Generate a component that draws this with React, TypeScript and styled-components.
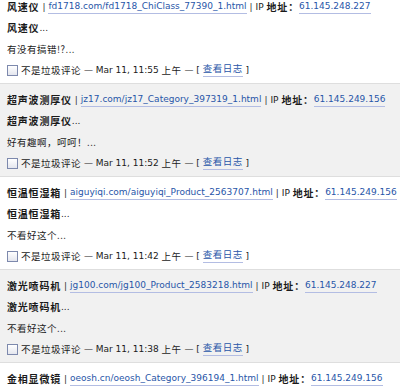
import React from "react";
import styled, { createGlobalStyle } from "styled-components";

interface Comment {
    title: string
    url: string
    ip: string
    text: string
    time: string
}

const comments: Comment[] = [
    { title: "风速仪", url: "fd1718.com/fd1718_ChiClass_77390_1.html", ip: "61.145.248.227", text: "有没有搞错!?...", time: "11:55" },
    { title: "超声波测厚仪", url: "jz17.com/jz17_Category_397319_1.html", ip: "61.145.249.156", text: "好有趣啊，呵呵！...", time: "11:52" },
    { title: "恒温恒湿箱", url: "aiguyiqi.com/aiguyiqi_Product_2563707.html", ip: "61.145.249.156", text: "不看好这个...", time: "11:42" },
    { title: "激光喷码机", url: "jg100.com/jg100_Product_2583218.html", ip: "61.145.248.227", text: "不看好这个...", time: "11:38" },
    { title: "金相显微镜", url: "oeosh.cn/oeosh_Category_396194_1.html", ip: "61.145.249.156", text: "不看好这个...", time: "11:30" },
];

const GlobalStyle = createGlobalStyle`
  body {
    margin: 0;
    background: #fff;
    overflow: hidden;
    font-family: "DejaVu Sans", "Noto Sans CJK SC", sans-serif;
    font-size: 9px;
    color: #1a1a1a;
  }
`;

function App() {
    return (
        <>
            <GlobalStyle />
            <List>
                {comments.map((c, i) => (
                    <Row key={c.url} $alt={i % 2 === 1}>
                        <Line>
                            <Cjk $bold>{c.title}</Cjk>
                            <Sep>|</Sep>
                            <Link href="#">{c.url}</Link>
                            <Sep>|</Sep>
                            <span>IP&nbsp;</span>
                            <Cjk $bold>地址：</Cjk>
                            <Link href="#">{c.ip}</Link>
                        </Line>
                        <Line>
                            <Cjk $bold>{c.title}</Cjk>...
                        </Line>
                        <Line>
                            <Cjk>{c.text}</Cjk>
                        </Line>
                        <Line>
                            <Check />
                            <Cjk>不是垃圾评论</Cjk>
                            <span>&nbsp;— Mar 11, {c.time}&nbsp;</span>
                            <Cjk>上午</Cjk>
                            <span>&nbsp;— [&nbsp;</span>
                            <Link href="#"><Cjk>查看日志</Cjk></Link>
                            <span>&nbsp;]</span>
                        </Line>
                    </Row>
                ))}
            </List>
        </>
    );
}

const List = styled.div`
  margin-top: -9px;
  display: flex;
  flex-direction: column;
`;

const Row = styled.div<{ $alt: boolean }>`
  display: flex;
  flex-direction: column;
  gap: 9px;
  padding: 10px 7px 7px;
  background: ${(p) => (p.$alt ? "#f1f1f1" : "#fff")};
  border-bottom: 1px solid #dedede;
`;

const Line = styled.div`
  display: flex;
  align-items: center;
  height: 12px;
  line-height: 12px;
  white-space: nowrap;
`;

const Cjk = styled.span<{ $bold?: boolean }>`
  font-family: "Noto Sans CJK SC", sans-serif;
  font-size: ${(p) => (p.$bold ? "10px" : "9.5px")};
  font-weight: ${(p) => (p.$bold ? 700 : 400)};
  letter-spacing: ${(p) => (p.$bold ? "0.8px" : "0.5px")};
`;

const Sep = styled.span`
  margin: 0 3px;
  color: #333;
`;

const Link = styled.a`
  color: #2856a8;
  text-decoration: none;
  border-bottom: 1px solid #b3bde3;
  line-height: 11px;
  padding-bottom: 1px;
`;

const Check = styled.span`
  width: 9px;
  height: 9px;
  margin-right: 3px;
  border: 1px solid #7d89ad;
  background: linear-gradient(#ffffff, #e4e6ee);
  box-sizing: content-box;
`;

export default App;
